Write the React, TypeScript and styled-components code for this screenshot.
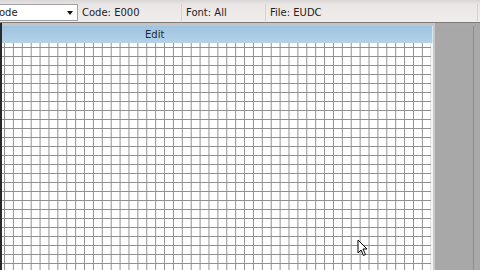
import React from "react";
import styled, { createGlobalStyle } from "styled-components";

const Global = createGlobalStyle`
  html, body { margin: 0; padding: 0; overflow: hidden; background: #a9a9a9; }
  #root { width: 480px; height: 270px; }
`;

const Window = styled.div`
  width: 480px;
  height: 270px;
  display: flex;
  flex-direction: column;
  font-family: "DejaVu Sans", "Liberation Sans", sans-serif;
  overflow: hidden;
  position: relative;
`;

const Toolbar = styled.div`
  height: 23px;
  flex: none;
  display: flex;
  align-items: flex-end;
  background: linear-gradient(#d9d6d6 0px, #ebe7e7 5px, #f1eded 22px);
  border-bottom: 1px solid #7c7c7c;
  padding-bottom: 1px;
  box-sizing: border-box;
`;

const Combo = styled.div`
  width: 106px;
  height: 17px;
  margin-left: -28px;
  box-sizing: border-box;
  background: #ffffff;
  border: 1px solid #a0a0a0;
  display: flex;
  align-items: center;
  justify-content: space-between;
  padding: 0 3px 0 4px;
  font-size: 10px;
  color: #222;
`;

const Arrow = styled.span`
  width: 0;
  height: 0;
  border-left: 3px solid transparent;
  border-right: 3px solid transparent;
  border-top: 4px solid #111;
  margin-right: 1px;
`;

const Field = styled.div<{ $w: number }>`
  width: ${(p) => p.$w}px;
  height: 17px;
  display: flex;
  align-items: center;
  padding-left: 4px;
  box-sizing: border-box;
  font-size: 10px;
  color: #222;
  border-right: 1px solid #d6d0d0;
`;

const Body = styled.div`
  flex: 1;
  display: flex;
  min-height: 0;
`;

const Editor = styled.div`
  width: 433px;
  flex: none;
  display: flex;
  flex-direction: column;
  border-left: 2px solid #2a2a2a;
  box-sizing: border-box;
  background: #c4c4c4;
  padding-top: 3px;
`;

const Header = styled.div`
  height: 17px;
  flex: none;
  background: linear-gradient(#9fc3df, #b4d2e8);
  display: flex;
  align-items: center;
  padding-left: 143px;
  font-size: 10px;
  color: #1a2a3a;
  border-right: 1px solid #d8e6f0;
`;

const Grid = styled.div`
  flex: 1;
  background-color: #ffffff;
  background-image: linear-gradient(to right, #909090 1px, transparent 1px),
    linear-gradient(to bottom, #909090 1px, transparent 1px);
  background-size: 8.9px 9px;
  background-position: 2px 4px;
  border-right: 2px solid #f4f4f4;
`;

const Side = styled.div`
  flex: 1;
  display: flex;
  background: #a9a9a9;
  border-left: 2px solid #c8c8c8;
  padding-top: 3px;
`;

const SideInner = styled.div`
  flex: 1;
  border-right: 1px solid #8c8c8c;
  margin-right: 6px;
  background: #a8a8a8;
`;

const Cursor = styled.svg`
  position: absolute;
  left: 357px;
  top: 239px;
`;

export default function App() {
  return (
    <Window>
      <Global />
      <Toolbar>
        <Combo>
          <span>Unicode</span>
          <Arrow />
        </Combo>
        <Field $w={104}>Code: E000</Field>
        <Field $w={84}>Font: All</Field>
        <Field $w={212}>File: EUDC</Field>
      </Toolbar>
      <Body>
        <Editor>
          <Header>Edit</Header>
          <Grid />
        </Editor>
        <Side>
          <SideInner />
        </Side>
      </Body>
      <Cursor width="12" height="18" viewBox="0 0 12 18">
        <path d="M1 1 L1 14 L4 11 L6.5 16.5 L8.5 15.5 L6 10 L10 10 Z" fill="#fff" stroke="#000" strokeWidth="1" strokeLinejoin="round" />
      </Cursor>
    </Window>
  );
}
